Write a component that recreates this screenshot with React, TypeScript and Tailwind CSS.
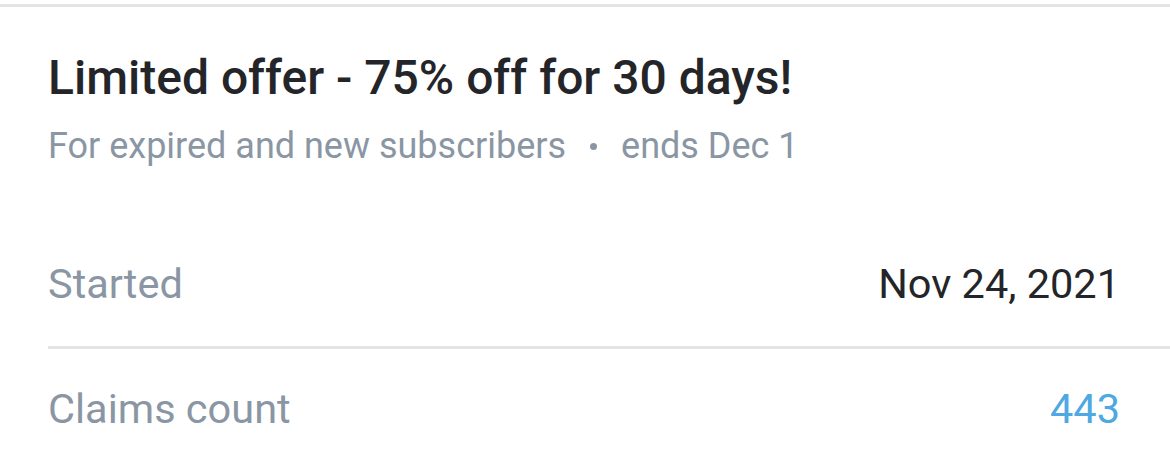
import React from "react";

export default function App() {
  return (
    <div className="w-[1170px] h-[461px] overflow-hidden bg-white" style={{ fontFamily: "Roboto, 'Noto Sans', sans-serif" }}>
      <div className="h-[4px]" />
      <div className="h-[3px] bg-[#e4e4e4]" />
      <div className="pl-[48px]">
        <div className="pt-[43px] pr-[50px]">
          <h1 className="text-[48px] leading-[56px] font-medium text-[#242529]">
            Limited offer - 75% off for 30 days!
          </h1>
          <div className="mt-[19px] flex items-center text-[36px] leading-[42px] text-[#8a96a3]">
            <span>For expired and new subscribers</span>
            <span className="mx-[24px] w-[7px] h-[7px] rounded-full bg-[#8a96a3]" />
            <span>ends Dec 1</span>
          </div>
        </div>
        <div className="mt-[55px]">
          <div className="flex items-center justify-between pr-[50px] pt-[38px] pb-[38px] border-b-[3px] border-[#e4e4e4]">
            <span className="text-[41.5px] leading-[48px] text-[#8a96a3]">Started</span>
            <span className="text-[41.5px] leading-[48px] text-[#242529]">Nov 24, 2021</span>
          </div>
          <div className="flex items-center justify-between pr-[50px] pt-[36px] pb-[36px]">
            <span className="text-[41.5px] leading-[48px] text-[#8a96a3]">Claims count</span>
            <span className="text-[41.5px] leading-[48px] text-[#4ea8e2]">443</span>
          </div>
        </div>
      </div>
    </div>
  );
}
